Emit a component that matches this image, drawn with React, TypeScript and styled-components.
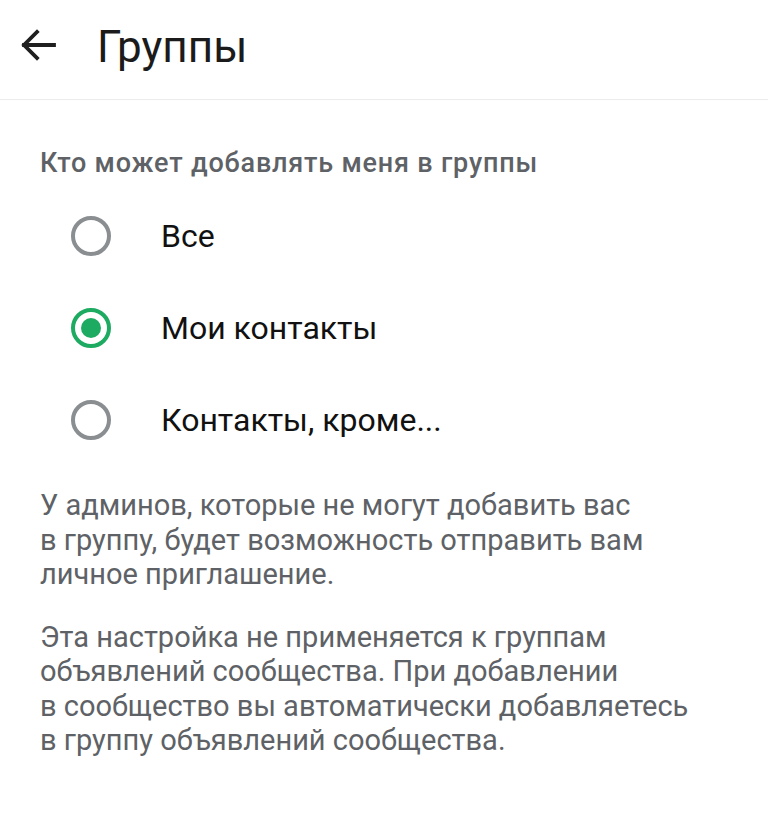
import styled, { createGlobalStyle } from 'styled-components'

const GlobalStyle = createGlobalStyle`
  html, body {
    margin: 0;
    padding: 0;
    background: #ffffff;
  }
  body {
    font-family: Roboto, 'Noto Sans', sans-serif;
  }
`

type Option = {
  id: string
  label: string
}

const options: Option[] = [
  { id: 'all', label: 'Все' },
  { id: 'contacts', label: 'Мои контакты' },
  { id: 'except', label: 'Контакты, кроме...' },
]

const selected = 'contacts'

const BackArrow = () => (
  <svg width="48" height="48" viewBox="0 0 24 24" fill="none">
    <path
      d="M20 12H5M11.5 5.5 5 12l6.5 6.5"
      stroke="#1f1f1f"
      strokeWidth="1.9"
      strokeLinecap="square"
    />
  </svg>
)

const App = () => {
  return (
    <>
      <GlobalStyle />
      <Page>
        <TopBar>
          <IconButton aria-label="Назад">
            <BackArrow />
          </IconButton>
          <Title>Группы</Title>
        </TopBar>
        <Content>
          <SectionTitle>Кто может добавлять меня в группы</SectionTitle>
          <OptionList>
            {options.map((opt) => (
              <OptionRow key={opt.id}>
                <Radio checked={opt.id === selected} />
                <OptionLabel>{opt.label}</OptionLabel>
              </OptionRow>
            ))}
          </OptionList>
          <Note>
            У админов, которые не могут добавить вас
            <br />
            в группу, будет возможность отправить вам
            <br />
            личное приглашение.
          </Note>
          <Note>
            Эта настройка не применяется к группам
            <br />
            объявлений сообщества. При добавлении
            <br />
            в сообщество вы автоматически добавляетесь
            <br />в группу объявлений сообщества.
          </Note>
        </Content>
      </Page>
    </>
  )
}

export default App

const Page = styled.div`
  width: 768px;
  min-height: 816px;
  background: #ffffff;
`

const TopBar = styled.header`
  height: 100px;
  display: flex;
  align-items: center;
  padding-left: 14px;
  gap: 35px;
  border-bottom: 1px solid #ececec;
  box-sizing: border-box;
`

const IconButton = styled.button`
  display: flex;
  align-items: center;
  justify-content: center;
  width: 48px;
  height: 48px;
  padding: 0;
  background: transparent;
  border: 0;
  margin-top: -10px;
`

const Title = styled.h1`
  margin: 0 0 6px 0;
  font-size: 44px;
  font-weight: 400;
  color: #1b1b1b;
`

const Content = styled.main`
  padding: 46px 40px 0 40px;
`

const SectionTitle = styled.h2`
  margin: 0;
  font-size: 27px;
  font-weight: 500;
  letter-spacing: 0.8px;
  color: #5e6266;
  line-height: 34px;
`

const OptionList = styled.div`
  display: flex;
  flex-direction: column;
  margin-top: 10px;
`

const OptionRow = styled.label`
  display: flex;
  align-items: center;
  height: 92px;
  padding-left: 31px;
  gap: 50px;
`

const Radio = styled.span<{ checked: boolean }>`
  flex: none;
  width: 40px;
  height: 40px;
  box-sizing: border-box;
  border-radius: 50%;
  border: 4px solid ${(p) => (p.checked ? '#1daa61' : '#8a8e91')};
  display: flex;
  align-items: center;
  justify-content: center;
  &::after {
    content: '';
    width: 20px;
    height: 20px;
    border-radius: 50%;
    background: #1daa61;
    display: ${(p) => (p.checked ? 'block' : 'none')};
  }
`

const OptionLabel = styled.span`
  font-size: 32px;
  color: #111111;
`

const Note = styled.p`
  margin: 22px 0 0 0;
  font-size: 29px;
  line-height: 34.5px;
  color: #5e6266;
  & + & {
    margin-top: 28px;
  }
`
